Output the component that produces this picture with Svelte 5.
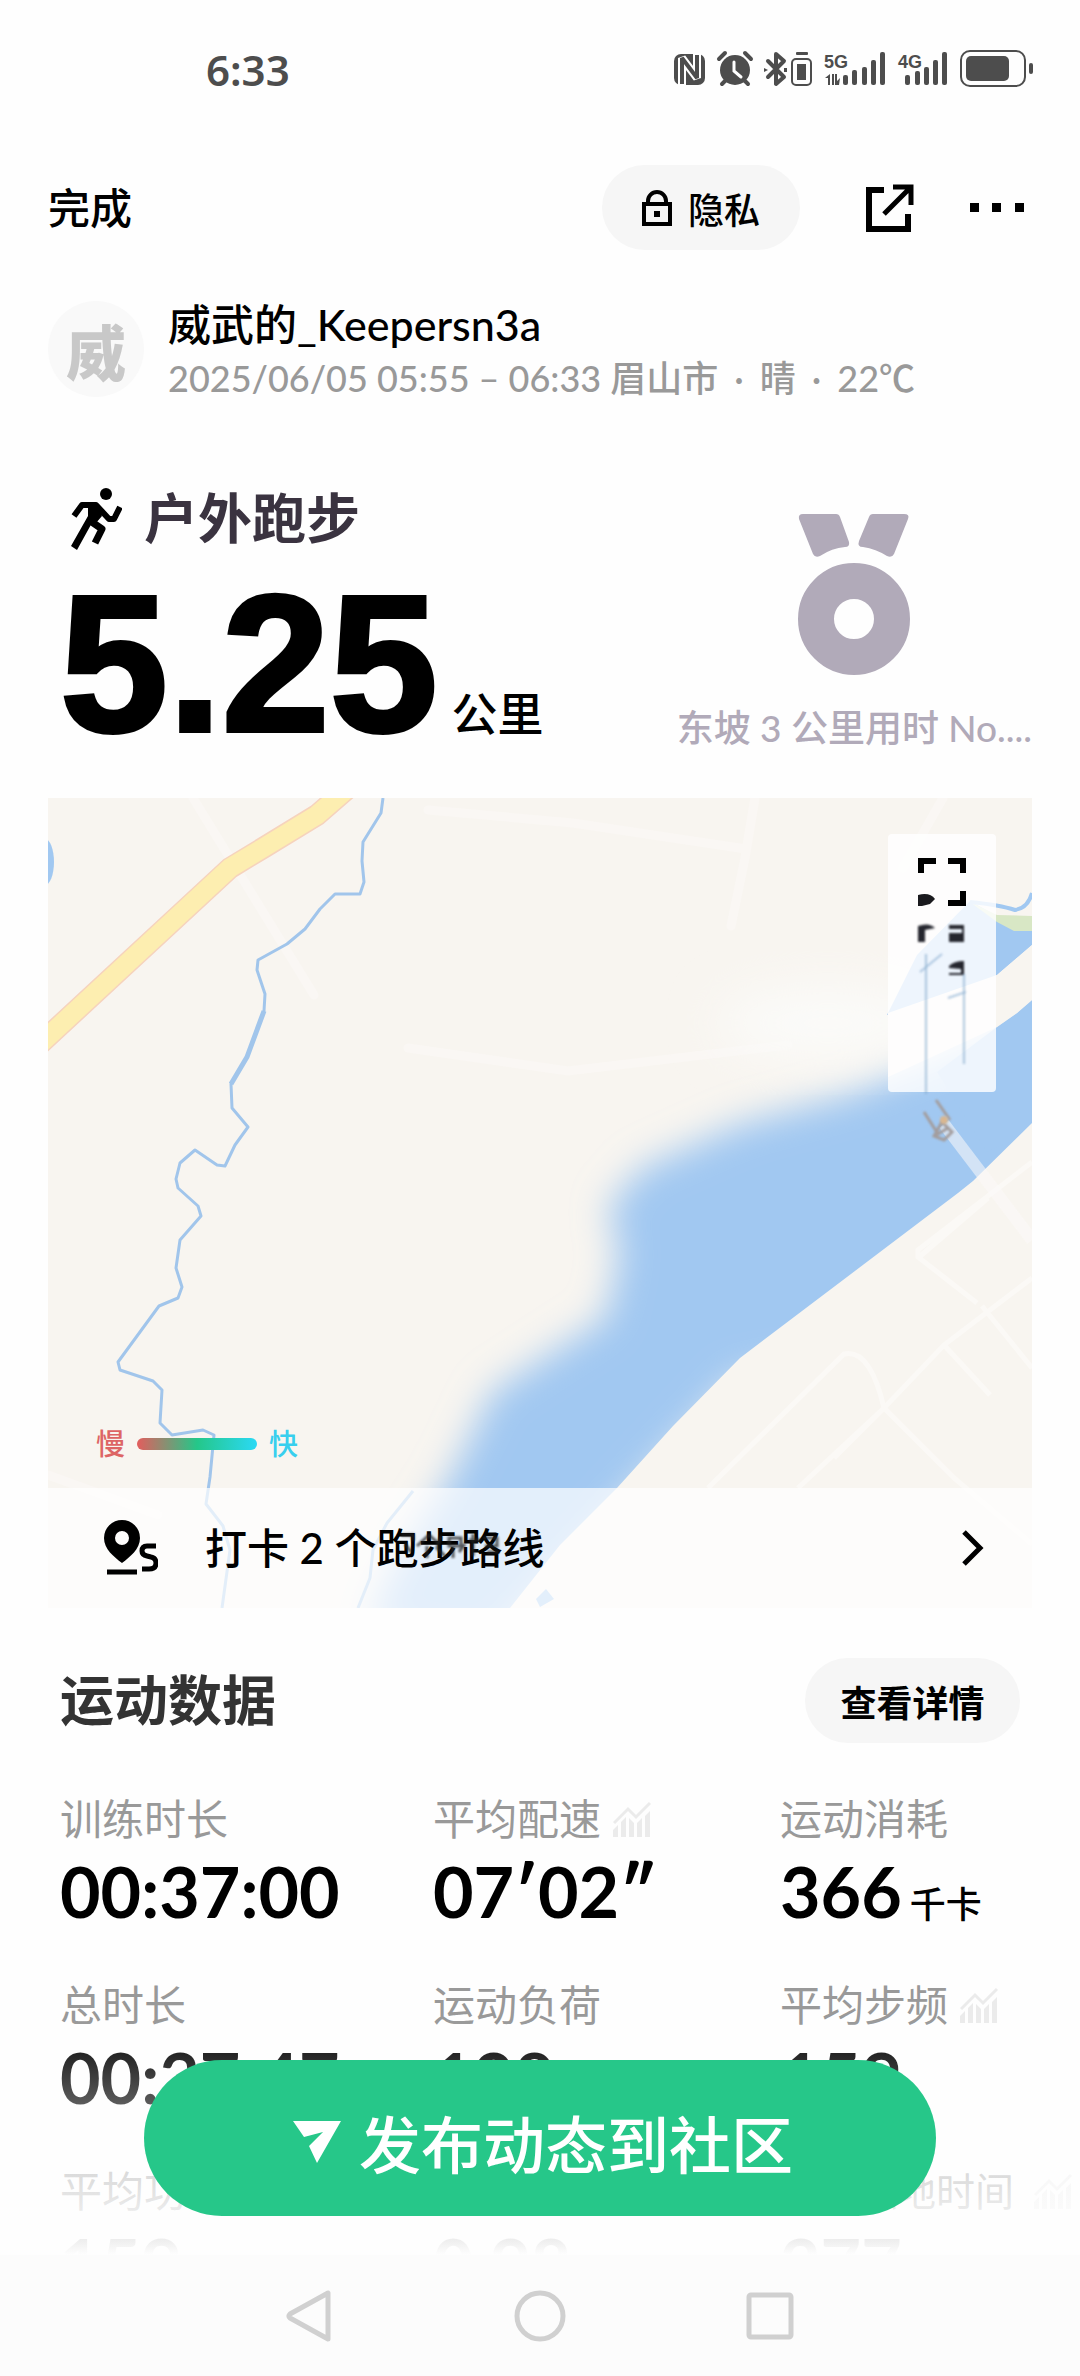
<script lang="ts">
  type Stat = {
    label: string;
    value: string;
    unit?: string;
    chart?: boolean;
    compact?: boolean;
  };

  const stats: Stat[] = [
    { label: '训练时长', value: '00:37:00' },
    { label: '平均配速', value: '07′02″', chart: true },
    { label: '运动消耗', value: '366', unit: '千卡' },
    { label: '总时长', value: '00:37:47' },
    { label: '运动负荷', value: '198' },
    { label: '平均步频', value: '159', chart: true },
    { label: '平均功率', value: '159' },
    { label: '垂直振幅', value: '0.98' },
    { label: '平均触地时间', value: '277', chart: true, compact: true }
  ];

  const signal5g = [
    [843, 75],
    [852, 70],
    [862, 67],
    [871, 60],
    [880, 52]
  ];
  const signal4g = [
    [905, 75],
    [915, 71],
    [924, 67],
    [933, 60],
    [942, 52]
  ];
</script>

<div class="screen">
  <div class="status-bar">
    <span class="clock">6:33</span>
    <svg class="status-icons" viewBox="674 50 360 38" fill="#4d4d4d" aria-hidden="true">
      <!-- nfc -->
      <rect x="674" y="54" width="31" height="31" rx="7" />
      <path d="M682 86V58l15 20V53" fill="none" stroke="#fff" stroke-width="8" stroke-linejoin="bevel" />
      <path d="M682 84V58l15 20V55" fill="none" stroke="#4d4d4d" stroke-width="4" stroke-linejoin="bevel" />
      <!-- alarm -->
      <circle cx="735" cy="70" r="15" />
      <path d="M719 59l6-6M751 59l-6-6M722 84l5-5M748 84l-5-5" fill="none" stroke="#4d4d4d" stroke-width="4" stroke-linecap="round" />
      <path d="M734 62v9l7 6" fill="none" stroke="#fff" stroke-width="3" stroke-linecap="round" />
      <!-- bluetooth -->
      <path d="M768 61l16 16-8 7V54l8 7-16 16" fill="none" stroke="#4d4d4d" stroke-width="4" stroke-linejoin="round" stroke-linecap="round" />
      <path d="M764 68l4 2-4 2zM784 68h3v4h-3z" />
      <rect x="796" y="52" width="12" height="3" rx="1" />
      <rect x="792" y="59" width="19" height="26" rx="4" fill="none" stroke="#4d4d4d" stroke-width="2" />
      <rect x="797" y="64" width="9" height="16" />
      <!-- signal -->
      <text x="824" y="68" class="net">5G</text>
      <path d="M825 78l5-4v11h-2v-7zM832 74h2v11h-2zM835 74h2v7l3-3-1 7h-4z" />
      {#each signal5g as [x, y]}
        <rect {x} {y} width="5" height={85 - y} rx="2" />
      {/each}
      <text x="898" y="68" class="net">4G</text>
      {#each signal4g as [x, y]}
        <rect {x} {y} width="5" height={85 - y} rx="2" />
      {/each}
      <!-- battery -->
      <rect x="961" y="51" width="64" height="35" rx="9" fill="none" stroke="#4d4d4d" stroke-width="2" />
      <rect x="966" y="56" width="43" height="25" rx="5" />
      <rect x="1029" y="63" width="4" height="11" rx="2" />
    </svg>
  </div>

  <main>
    <header class="top-bar">
      <button class="done">完成</button>
      <button class="pill privacy">
        <svg width="30" height="36" viewBox="0 0 30 36" fill="none" stroke="#000" stroke-width="4" aria-hidden="true">
          <rect x="2" y="14" width="26" height="20" />
          <path d="M6 14v-3a9 9 0 0 1 18 0v3" />
          <rect x="12" y="21" width="6" height="6" fill="#000" stroke="none" />
        </svg>
        隐私
      </button>
      <button class="icon-button share" aria-label="分享">
        <svg width="48" height="48" viewBox="0 0 48 48" fill="none" stroke="#000" stroke-width="6">
          <path d="M18 6H3v39h39V30" />
          <path d="M27 3h18v18M44 4L18 30" stroke-width="5" />
        </svg>
      </button>
      <button class="icon-button" aria-label="更多">
        <svg width="54" height="9" viewBox="0 0 54 9">
          <path d="M0 0h9v9H0zM22 0h9v9h-9zM45 0h9v9h-9z" />
        </svg>
      </button>
    </header>

    <section class="user">
      <div class="avatar">威</div>
      <div class="user-text">
        <div class="user-name">威武的_Keepersn3a</div>
        <div class="user-meta">
          <span>2025/06/05 05:55 – 06:33 眉山市</span>
          <span>·</span>
          <span>晴</span>
          <span>·</span>
          <span>22℃</span>
        </div>
      </div>
    </section>

    <section class="summary">
      <div class="distance">
        <h1>
          <svg width="52" height="62" viewBox="0 0 52 62" fill="none" stroke="#000" stroke-width="6" aria-hidden="true">
            <circle cx="36" cy="6" r="6" fill="#000" stroke="none" />
            <path d="M4 28l8-11h14l13 14h5l6-12" stroke-linejoin="round" />
            <path d="M18 16h10l4 12-6 7-3-2L7 62 1 58l17-30z" fill="#000" stroke="none" />
            <path d="M19 32l13 9-7 14" stroke-width="7" stroke-linejoin="round" />
          </svg>
          户外跑步
        </h1>
        <p><strong>5.25</strong>公里</p>
      </div>
      <div class="medal">
        <svg width="112" height="162" viewBox="0 0 112 162" aria-hidden="true">
          <path d="M5 0h33q3 0 4 3l9 25q1 5-4 5-13 1-25 9-5 2-7-2L1 5Q0 0 5 0zM75 0h31q6 0 4 5L96 40q-2 4-7 2-11-7-24-9-6 0-4-6L71 3q1-3 4-3z" />
          <circle cx="56" cy="105" r="38" fill="none" stroke="#b1aab9" stroke-width="36" />
        </svg>
        <span>东坡 3 公里用时 No....</span>
      </div>
    </section>

    <section class="map">
      <svg class="map-canvas" viewBox="0 0 984 810" preserveAspectRatio="xMidYMid slice" aria-hidden="true">
        <defs>
          <filter id="soft" x="-20%" y="-20%" width="140%" height="140%">
            <feGaussianBlur stdDeviation="18" />
          </filter>
          <filter id="haze" x="-50%" y="-50%" width="200%" height="200%">
            <feGaussianBlur stdDeviation="24" />
          </filter>
          <filter id="faint" x="-50%" y="-50%" width="200%" height="200%">
            <feGaussianBlur stdDeviation="1" />
          </filter>
        </defs>
        <rect width="984" height="810" fill="#f8f5f0" />

        <g fill="none" stroke="#faf7f4" stroke-width="9" stroke-linecap="round">
          <path d="M145 0l121 197M380 12l145 13 173 26M707 0l-10 60-14 68M360 250l160 23 220-26M895 0l-40 70M0 677l110 40" />
        </g>

        <!-- wide river, soft on the upper bank -->
        <path
          d="M320 830l25-60 55-86 22-44 22-46 58-38 56-36 14-66-12-44 34-40 98-44 110-30 70-30 90-34 50-40v330L690 580 440 850z"
          fill="#a1c8f1"
          filter="url(#soft)"
        />
        <ellipse cx="780" cy="225" rx="110" ry="36" fill="#fbfbf9" filter="url(#haze)" />
        <path d="M984 202l-15 13-20 14-60 45 50 80 45-20zM984 147l-35 30-40 20-70 20 30-60 53-54 27 15 20 11h35z" fill="#a1c8f1" />
        <path d="M840 215l109-38 35-30v55l-15 13-20 14-109 50z" fill="#f8f5f0" />
        <path d="M922 104l27 13 35 1v15h-18l-17-9z" fill="#d8e7c5" />
        <path d="M922 104q30 3 45 8 13-2 17-17" fill="none" stroke="#a1c8f1" stroke-width="4" />
        <path d="M984 325l-59 58-15 12-218 165-67 68-56 62-57 57-50 63h522z" fill="#f8f5f0" />
        <path d="M488 801l10-10 8 10-14 8z" fill="#a1c8f1" />

        <g fill="none" stroke="#fbf9f6" stroke-width="5">
          <path d="M984 364l-114 88v7l59 46M940 400l-70 60M984 480l-88 67-60 63-50 50M836 610l70 70 78 66M836 610q-14-60-40-54L660 690M896 547l46 50M836 610L750 690M984 570l-50-62" />
        </g>
        <path d="M896 326l88 116" stroke="#fcfafa" stroke-width="12" opacity=".55" />
        <path d="M876 314l14 22 10-6M886 338l8-14 10 10-8 8zM888 302l14 20" fill="none" stroke="#a39c9c" stroke-width="3" filter="url(#faint)" />
        <circle cx="896" cy="322" r="4" fill="#d9b791" filter="url(#faint)" />

        <ellipse cx="-3" cy="64" rx="9" ry="23" fill="#a1c8f1" />
        <path d="M-20 257L182 70l33-20 54-33 30-26" fill="none" stroke="#f6d3bd" stroke-width="22" />
        <path d="M-20 257L182 70l33-20 54-33 30-26" fill="none" stroke="#fdeeb0" stroke-width="19" />
        <path
          d="M335 0l-2 15-18 29-1 19 2 21-4 12h-25l-15 15-15 20-18 15-29 16-1 10 8 24-1 17-17 46-16 27 1 24 16 19-13 18-10 21-8-1-22-15-15 13-4 16 2 9 20 18 3 10-21 24-4 28 6 19-4 11-19 8-41 56 2 8 33 11 9 9-2 33 12 12 31-5 11 5-4 42-4 27 17 22 7 24-8 58"
          fill="none"
          stroke="#a1c5eb"
          stroke-width="3"
          stroke-linejoin="round"
        />
        <path d="M216 213l-17 46-16 27" fill="none" stroke="#a1c5eb" stroke-width="5" />
        <path d="M365 693l-26 32-14 27-3 28-12 30" fill="none" stroke="#a1c5eb" stroke-width="3" />
      </svg>

      <div class="map-tools">
        <button aria-label="全屏">
          <svg width="48" height="48" viewBox="0 0 48 48" fill="none" stroke="#000" stroke-width="6">
            <path d="M3 15V3h15M30 3h15v12M45 33v12H30" />
            <path d="M0 37q12-3 17 4l-5 5-12 3z" fill="#1a1a1e" stroke="none" />
          </svg>
        </button>
        <svg class="layers" width="48" height="170" viewBox="0 0 48 170" aria-hidden="true">
          <path d="M0 2q11-4 17 2l-10 2v12H0zM31 1h15v17H31V9h13V5H31zM31 42q5-5 15-5v14h-3v-6l-12-1zM31 49h15v2H31z" fill="#25262e" />
          <path d="M8 30v140M46 50v90" stroke="#7da5c9" stroke-width="2" opacity=".6" />
          <path d="M2 48l22-18M30 74l18-6" stroke="#91b3d4" stroke-width="2" opacity=".7" />
        </svg>
      </div>

      <div class="pace-legend">
        <span class="slow">慢</span>
        <i></i>
        <span class="fast">快</span>
      </div>

      <button class="route-row">
        <svg width="54" height="56" viewBox="0 0 54 56" aria-hidden="true">
          <path d="M18 0a18 18 0 0 1 18 18c0 11-10 19-18 25C10 37 0 29 0 18A18 18 0 0 1 18 0zm0 11a7 7 0 1 0 0 14 7 7 0 0 0 0-14z" fill-rule="evenodd" />
          <path d="M3 52h30M52 26h-9q-5 0-5 5 0 4 5 5l4 1q5 1 5 6 0 6-7 6h-7" fill="none" stroke="#000" stroke-width="5" />
        </svg>
        <span class="route-name">
          打卡 2 个跑步路线
          <svg class="route-trace" width="104" height="34" viewBox="0 0 104 34" fill="none" stroke="#222" stroke-width="3" aria-hidden="true">
            <path d="M2 3h12v6M6 12l6 8M18 14L30 3l10 9M28 14v12M42 4l-4 12 8 8M50 6h12v8H50zM54 14v12M66 12l-6 8M70 8h12M74 2v22M84 6h14v8H86M88 20h12" />
          </svg>
        </span>
        <svg width="22" height="36" viewBox="0 0 22 36" fill="none" stroke="#000" stroke-width="5" aria-hidden="true">
          <path d="M2 2l16 16L2 34" />
        </svg>
      </button>
    </section>

    <section class="data">
      <div class="data-head">
        <h2>运动数据</h2>
        <button class="pill detail">查看详情</button>
      </div>
      <dl>
        {#each stats as stat}
          <div class="stat">
            <dt class:compact={stat.compact}>
              {stat.label}
              {#if stat.chart}
                <svg width="38" height="36" viewBox="0 0 38 36" aria-hidden="true">
                  <path d="M1 22L15 8l8 8L37 2" fill="none" stroke="#ebebeb" stroke-width="3" />
                  <path d="M0 29l5-5v12H0zM8 21l5-5v20H8zM16 17l5 5v14h-5zM24 22l5-5v19h-5zM32 15l5-5v26h-5z" fill="#ebebeb" />
                </svg>
              {/if}
            </dt>
            <dd>{stat.value}{#if stat.unit}<small>{stat.unit}</small>{/if}</dd>
          </div>
        {/each}
      </dl>
    </section>

    <div class="publish">
      <button>
        <svg width="48" height="42" viewBox="0 0 48 42" fill="#fff" aria-hidden="true">
          <path d="M0 0h48L24 42l-8-17 14-14-19 5z" />
        </svg>
        发布动态到社区
      </button>
    </div>
  </main>

  <nav>
    <button aria-label="返回">
      <svg width="48" height="52" viewBox="0 0 48 52"><path d="M42 3v46L4 28q-2-2 0-4z" /></svg>
    </button>
    <button aria-label="主页">
      <svg width="52" height="52" viewBox="0 0 52 52"><circle cx="26" cy="26" r="23" /></svg>
    </button>
    <button aria-label="最近任务">
      <svg width="48" height="48" viewBox="0 0 48 48"><rect x="3" y="3" width="42" height="42" rx="2" /></svg>
    </button>
  </nav>
</div>

<style>
  :global(body) {
    margin: 0;
    background: #fefefe;
  }

  .screen {
    display: flex;
    flex-direction: column;
    height: 100vh;
    color: #000;
    font-family: Lato, 'Noto Sans CJK SC', sans-serif;
  }

  button {
    display: flex;
    align-items: center;
    padding: 0;
    border: none;
    background: none;
    color: inherit;
    font-family: inherit;
    cursor: pointer;
  }

  svg {
    display: block;
    flex-shrink: 0;
  }

  .status-bar {
    display: flex;
    align-items: center;
    justify-content: space-between;
    padding: 0 46px 0 206px;
    height: 138px;
    flex-shrink: 0;
  }

  .clock {
    color: #4d4d4d;
    font-family: 'Noto Sans', sans-serif;
    font-size: 42px;
    font-weight: 600;
  }

  .status-icons {
    width: 360px;
    height: 38px;
  }

  .net {
    font-family: 'Liberation Sans', sans-serif;
    font-size: 18px;
    font-weight: 700;
  }

  main {
    position: relative;
    flex: 1;
    min-height: 0;
    overflow: hidden;
  }

  .top-bar {
    display: flex;
    align-items: center;
    padding: 27px 56px 0 48px;
  }

  .done {
    margin-right: auto;
    font-size: 42px;
    font-weight: 500;
    line-height: 56px;
  }

  .pill {
    justify-content: center;
    height: 85px;
    border-radius: 43px;
    background: #f6f6f6;
    font-size: 36px;
  }

  .privacy {
    gap: 16px;
    width: 198px;
    font-weight: 500;
  }

  .share {
    margin: 0 56px 0 66px;
  }

  .user {
    display: flex;
    align-items: center;
    gap: 24px;
    padding: 44px 48px 0;
  }

  .user-text {
    padding-top: 4px;
  }

  .avatar {
    display: flex;
    align-items: center;
    justify-content: center;
    width: 96px;
    height: 96px;
    border-radius: 50%;
    background: #f9f9f9;
    color: #c8c8c8;
    font-size: 60px;
    font-weight: 900;
  }

  .user-name {
    font-size: 43px;
    font-weight: 500;
    line-height: 54px;
  }

  .user-meta {
    display: flex;
    gap: 16px;
    color: #999;
    font-size: 36px;
    font-weight: 500;
    line-height: 52px;
  }

  .summary {
    display: flex;
    justify-content: space-between;
    padding: 76px 48px 0 60px;
  }

  h1 {
    display: flex;
    align-items: center;
    gap: 22px;
    margin: 0;
    padding-left: 10px;
    color: #3a3340;
    font-size: 54px;
    font-weight: 700;
    line-height: 78px;
  }

  .distance p {
    margin: 36px 0 0;
    font-size: 46px;
    font-weight: 500;
    line-height: 46px;
    white-space: nowrap;
  }

  .distance strong {
    margin-right: 14px;
    font-family: 'Liberation Sans', sans-serif;
    font-size: 194px;
    font-weight: 700;
    line-height: 140px;
    -webkit-text-stroke: 4px #000;
  }

  .medal {
    display: flex;
    flex-direction: column;
    align-items: center;
    gap: 28px;
    padding-top: 34px;
    color: #b1aab9;
    font-size: 37px;
    font-weight: 500;
    line-height: 48px;
    fill: #b1aab9;
    white-space: nowrap;
  }

  .map {
    position: relative;
    margin: 46px 48px 0;
    height: 810px;
    overflow: hidden;
  }

  .map-canvas {
    width: 100%;
    height: 100%;
  }

  .map-tools {
    position: absolute;
    top: 36px;
    right: 36px;
    display: flex;
    flex-direction: column;
    align-items: center;
    gap: 18px;
    box-sizing: border-box;
    width: 108px;
    height: 258px;
    padding-top: 24px;
    border-radius: 4px;
    background: rgba(255, 255, 255, 0.82);
  }

  .layers {
    filter: blur(1px);
  }

  .pace-legend {
    position: absolute;
    bottom: 144px;
    left: 48px;
    display: flex;
    align-items: center;
    gap: 12px;
    font-size: 29px;
    font-weight: 500;
    line-height: 40px;
  }

  .pace-legend i {
    width: 120px;
    height: 12px;
    border-radius: 6px;
    background: linear-gradient(90deg, #e35d5d, #24c789 50%, #2bd9f5);
  }

  .slow {
    color: #dd6565;
  }

  .fast {
    color: #38cfee;
  }

  .route-row {
    position: absolute;
    right: 0;
    bottom: 0;
    left: 0;
    height: 120px;
    padding: 0 48px 0 56px;
    background: rgba(255, 255, 255, 0.7);
    font-size: 42px;
    font-weight: 500;
    line-height: 56px;
  }

  .route-name {
    position: relative;
    margin: 0 auto 0 47px;
  }

  .route-trace {
    position: absolute;
    top: 12px;
    right: 42px;
    filter: blur(1px);
    opacity: 0.75;
  }

  .data {
    padding: 50px 60px 0;
  }

  .data-head {
    display: flex;
    align-items: center;
    justify-content: space-between;
  }

  h2 {
    margin: 0;
    color: #333;
    font-size: 54px;
    font-weight: 700;
    line-height: 78px;
  }

  .detail {
    width: 215px;
    font-weight: 700;
  }

  dl {
    display: grid;
    grid-template-columns: 373fr 347fr 240fr;
    row-gap: 42px;
    margin: 48px 0 0;
  }

  .stat {
    min-width: 0;
    white-space: nowrap;
  }

  dt {
    display: flex;
    align-items: center;
    gap: 12px;
    color: #999;
    font-size: 42px;
    line-height: 56px;
  }

  .compact {
    gap: 20px;
    font-size: 39px;
  }

  dd {
    margin: 0;
    font-size: 70px;
    font-weight: 700;
    line-height: 88px;
  }

  dd small {
    margin-left: 8px;
    font-size: 36px;
    font-weight: 500;
    line-height: 36px;
  }

  .publish {
    position: absolute;
    right: 0;
    bottom: 0;
    left: 0;
    display: flex;
    padding: 40px 144px 39px;
    background: linear-gradient(rgba(254, 254, 254, 0), #fefefe);
  }

  .publish button {
    flex: 1;
    justify-content: center;
    gap: 18px;
    height: 156px;
    padding: 8px 0 0 6px;
    border-radius: 78px;
    background: #26c789;
    color: #fff;
    font-size: 62px;
    font-weight: 500;
  }

  nav {
    display: flex;
    flex-shrink: 0;
    align-items: center;
    justify-content: center;
    gap: 180px;
    height: 121px;
    background: #fcfcfc;
  }

  nav svg {
    fill: none;
    stroke: #d0d0d0;
    stroke-width: 5;
    stroke-linejoin: round;
  }
</style>
